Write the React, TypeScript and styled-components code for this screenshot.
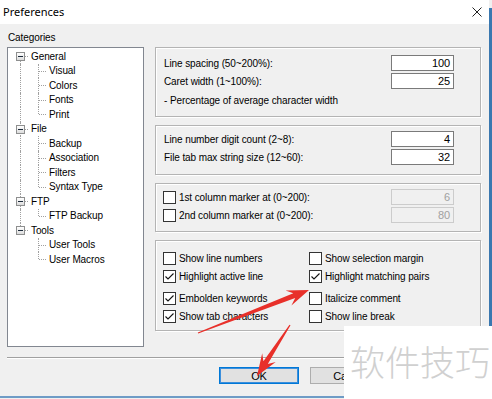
import React from "react";
import styled, { createGlobalStyle } from "styled-components";

const GlobalStyle = createGlobalStyle`
  html, body {
    margin: 0;
    padding: 0;
    background: #ffffff;
  }
  body {
    font-family: "Liberation Sans", Arial, sans-serif;
    color: #000;
  }
`;

const Screen = styled.div`
  position: relative;
  width: 492px;
  height: 399px;
  overflow: hidden;
  display: flex;
  flex-direction: column;
  background: #f0f0f0;
`;

const Frame = styled.div`
  display: flex;
  height: 396px;
  flex-shrink: 0;
`;

const Dialog = styled.div`
  width: 489px;
  display: flex;
  flex-direction: column;
  background: #f0f0f0;
`;

const RightEdge = styled.div`
  width: 3px;
  margin-top: 8px;
  background: #3a78b0;
`;

const BottomEdge = styled.div`
  height: 2px;
  background: #6f9cc6;
  flex-shrink: 0;
`;

const TitleBar = styled.div`
  height: 24px;
  flex-shrink: 0;
  background: #ffffff;
  display: flex;
  align-items: center;
  justify-content: space-between;
  padding: 0 7px 0 3px;
`;

const Title = styled.span`
  font-family: "Noto Sans", "Liberation Sans", sans-serif;
  font-size: 11px;
  line-height: 14px;
`;

const CloseIcon = styled.svg`
  width: 10px;
  height: 10px;
  display: block;
`;

const Body = styled.div`
  flex: 1;
  display: flex;
  flex-direction: column;
  padding: 0 7px;
  font-size: 10px;
  letter-spacing: -0.1px;
`;

const Main = styled.div`
  display: flex;
  gap: 11px;
`;

const Sidebar = styled.div`
  width: 137px;
  display: flex;
  flex-direction: column;
`;

const SectionLabel = styled.div`
  height: 20px;
  padding: 3px 0 0 1px;
  display: flex;
  align-items: center;
`;

const Tree = styled.div`
  height: 300px;
  box-sizing: border-box;
  border: 1px solid #828790;
  background: #ffffff;
  padding: 1px 0 0 3px;
`;

const TreeRow = styled.div`
  height: 14.5px;
  display: flex;
  align-items: stretch;
`;

type Vert = "full" | "top" | "bottom" | "none";

const Guide = styled.div<{ $vert: Vert; $horiz?: boolean }>`
  position: relative;
  width: 18px;
  flex-shrink: 0;

  &::before {
    content: "";
    position: absolute;
    left: 9px;
    top: ${(p) => (p.$vert === "bottom" ? "50%" : "0")};
    bottom: ${(p) => (p.$vert === "top" ? "50%" : "0")};
    border-left: 1px dotted #a0a0a0;
    display: ${(p) => (p.$vert === "none" ? "none" : "block")};
  }

  &::after {
    content: "";
    position: absolute;
    left: 10px;
    right: 1px;
    top: 50%;
    border-top: 1px dotted #a0a0a0;
    display: ${(p) => (p.$horiz ? "block" : "none")};
  }
`;

const Expander = styled.div`
  position: absolute;
  z-index: 1;
  left: 5px;
  top: 50%;
  margin-top: -4px;
  width: 7px;
  height: 7px;
  border: 1px solid #8e8f8f;
  background: linear-gradient(#ffffff, #dcdcdc);
  display: flex;
  align-items: center;
  justify-content: center;

  &::before {
    content: "";
    width: 5px;
    height: 1px;
    background: #1c2a3a;
  }
`;

const TreeText = styled.span`
  padding-left: 2px;
  display: flex;
  align-items: center;
  white-space: nowrap;
`;

const Content = styled.div`
  width: 326px;
  padding-top: 23px;
  display: flex;
  flex-direction: column;
  gap: 8px;
`;

const Group = styled.div<{ $h: number; $pt: number }>`
  height: ${(p) => p.$h}px;
  box-sizing: border-box;
  border: 1px solid #b4b4b4;
  box-shadow: inset 1px 1px 0 #ffffff, 1px 1px 0 #ffffff;
  padding: ${(p) => p.$pt}px 26px 0 7px;
  display: flex;
  flex-direction: column;
  gap: 2px;
`;

const FieldRow = styled.div`
  height: 16px;
  display: flex;
  align-items: center;
  justify-content: space-between;
`;

const Label = styled.span`
  padding-left: 1px;
  white-space: nowrap;
`;

const Note = styled.div`
  height: 18px;
  padding-left: 1px;
  display: flex;
  align-items: center;
`;

const NumberBox = styled.div<{ $disabled?: boolean }>`
  width: 63px;
  height: 16px;
  box-sizing: border-box;
  border: 1px solid ${(p) => (p.$disabled ? "#cccccc" : "#7a7a7a")};
  background: ${(p) => (p.$disabled ? "#f0f0f0" : "#ffffff")};
  color: ${(p) => (p.$disabled ? "#a0a0a0" : "#000000")};
  display: flex;
  align-items: center;
  justify-content: flex-end;
  padding-right: 3px;
  font-size: 11px;
`;

const CheckLine = styled.div`
  display: flex;
  align-items: center;
  gap: 3px;
  white-space: nowrap;
  height: 16px;
`;

const Box = styled.div`
  width: 13px;
  height: 13px;
  box-sizing: border-box;
  border: 1px solid #333333;
  background: #ffffff;
  flex-shrink: 0;
  display: flex;
  align-items: center;
  justify-content: center;
`;

const CheckGrid = styled.div<{ $mt?: number }>`
  display: grid;
  grid-template-columns: 146px 1fr;
  row-gap: 2px;
  margin-top: ${(p) => p.$mt ?? 0}px;
`;

const Separator = styled.div`
  margin-top: 10px;
  border-top: 1px solid #a0a0a0;
  border-bottom: 1px solid #ffffff;
`;

const ButtonRow = styled.div`
  margin-top: 8px;
  padding-left: 212px;
  display: flex;
  gap: 11px;
`;

const Button = styled.div<{ $default?: boolean }>`
  width: 80px;
  height: 17px;
  box-sizing: border-box;
  border: 1px solid ${(p) => (p.$default ? "#0078d7" : "#adadad")};
  box-shadow: ${(p) => (p.$default ? "inset 0 0 0 1px #3c8fdc" : "none")};
  background: #e1e1e1;
  display: flex;
  align-items: center;
  justify-content: center;
  font-size: 11px;
`;

const Watermark = styled.div`
  position: absolute;
  left: 344px;
  top: 326px;
  right: 0;
  bottom: 0;
  background: #ffffff;
  display: flex;
  align-items: center;
  padding: 0 0 4px 6px;
  font-family: "Noto Sans CJK SC", "Noto Sans", sans-serif;
  font-size: 35px;
  font-weight: 300;
  color: #d0d0d0;
  white-space: nowrap;
`;

const Arrows = styled.svg`
  position: absolute;
  left: 0;
  top: 0;
  width: 492px;
  height: 399px;
  pointer-events: none;
`;

const tree = [
  { label: "General", children: ["Visual", "Colors", "Fonts", "Print"] },
  { label: "File", children: ["Backup", "Association", "Filters", "Syntax Type"] },
  { label: "FTP", children: ["FTP Backup"] },
  { label: "Tools", children: ["User Tools", "User Macros"] },
];

function Check({ on }: { on?: boolean }) {
  return (
    <Box>
      {on && (
        <svg width="11" height="11" viewBox="0 0 11 11">
          <polyline points="1.5,5.5 4,8 9.5,2.5" fill="none" stroke="#111" strokeWidth="1.1" />
        </svg>
      )}
    </Box>
  );
}

function CheckItem({ on, children }: { on?: boolean; children: React.ReactNode }) {
  return (
    <CheckLine>
      <Check on={on} />
      <span>{children}</span>
    </CheckLine>
  );
}

// tapered screenshot-style arrow, tail -> tip
function arrow(x1: number, y1: number, x2: number, y2: number, head = 22, half = 8) {
  const dx = x2 - x1;
  const dy = y2 - y1;
  const len = Math.hypot(dx, dy);
  const ux = dx / len;
  const uy = dy / len;
  const nx = -uy;
  const ny = ux;
  const bx = x2 - ux * head;
  const by = y2 - uy * head;
  const kx = x2 - ux * head * 0.72;
  const ky = y2 - uy * head * 0.72;
  const pts = [
    [x1 + nx * 0.6, y1 + ny * 0.6],
    [kx + nx * 2.6, ky + ny * 2.6],
    [bx + nx * half, by + ny * half],
    [x2, y2],
    [bx - nx * half, by - ny * half],
    [kx - nx * 2.6, ky - ny * 2.6],
    [x1 - nx * 0.6, y1 - ny * 0.6],
  ];
  return pts.map((p) => `${p[0].toFixed(1)},${p[1].toFixed(1)}`).join(" ");
}

export default function App() {
  return (
    <>
      <GlobalStyle />
      <Screen>
        <Frame>
          <Dialog>
            <TitleBar>
              <Title>Preferences</Title>
              <CloseIcon viewBox="0 0 10 10">
                <path d="M0.5 0.5 L9.5 9.5 M9.5 0.5 L0.5 9.5" stroke="#222" strokeWidth="1" />
              </CloseIcon>
            </TitleBar>
            <Body>
              <Main>
                <Sidebar>
                  <SectionLabel>Categories</SectionLabel>
                  <Tree>
                    {tree.map((node, i) => {
                      const last = i === tree.length - 1;
                      return (
                        <React.Fragment key={node.label}>
                          <TreeRow>
                            <Guide $vert={i === 0 ? "bottom" : last ? "top" : "full"} $horiz>
                              <Expander />
                            </Guide>
                            <TreeText>{node.label}</TreeText>
                          </TreeRow>
                          {node.children.map((child, j) => (
                            <TreeRow key={child}>
                              <Guide $vert={last ? "none" : "full"} />
                              <Guide $vert={j === node.children.length - 1 ? "top" : "full"} $horiz />
                              <TreeText>{child}</TreeText>
                            </TreeRow>
                          ))}
                        </React.Fragment>
                      );
                    })}
                  </Tree>
                </Sidebar>

                <Content>
                  <Group $h={70} $pt={7}>
                    <FieldRow>
                      <Label>Line spacing (50~200%):</Label>
                      <NumberBox>100</NumberBox>
                    </FieldRow>
                    <FieldRow>
                      <Label>Caret width (1~100%):</Label>
                      <NumberBox>25</NumberBox>
                    </FieldRow>
                    <Note>- Percentage of average character width</Note>
                  </Group>

                  <Group $h={50} $pt={5}>
                    <FieldRow>
                      <Label>Line number digit count (2~8):</Label>
                      <NumberBox>4</NumberBox>
                    </FieldRow>
                    <FieldRow>
                      <Label>File tab max string size (12~60):</Label>
                      <NumberBox>32</NumberBox>
                    </FieldRow>
                  </Group>

                  <Group $h={49} $pt={5}>
                    <FieldRow>
                      <CheckItem>1st column marker at (0~200):</CheckItem>
                      <NumberBox $disabled>6</NumberBox>
                    </FieldRow>
                    <FieldRow>
                      <CheckItem>2nd column marker at (0~200):</CheckItem>
                      <NumberBox $disabled>80</NumberBox>
                    </FieldRow>
                  </Group>

                  <Group $h={91} $pt={9}>
                    <CheckGrid>
                      <CheckItem>Show line numbers</CheckItem>
                      <CheckItem>Show selection margin</CheckItem>
                      <CheckItem on>Highlight active line</CheckItem>
                      <CheckItem on>Highlight matching pairs</CheckItem>
                    </CheckGrid>
                    <CheckGrid $mt={4}>
                      <CheckItem on>Embolden keywords</CheckItem>
                      <CheckItem>Italicize comment</CheckItem>
                      <CheckItem on>Show tab characters</CheckItem>
                      <CheckItem>Show line break</CheckItem>
                    </CheckGrid>
                  </Group>
                </Content>
              </Main>

              <Separator />
              <ButtonRow>
                <Button $default>OK</Button>
                <Button>Cancel</Button>
              </ButtonRow>
            </Body>
          </Dialog>
          <RightEdge />
        </Frame>
        <BottomEdge />

        <Watermark>软件技巧</Watermark>

        <Arrows viewBox="0 0 492 399">
          <polygon points={arrow(198, 333, 309, 290)} fill="#e8302a" />
          <polygon points={arrow(290, 325, 257, 376)} fill="#e8302a" />
        </Arrows>
      </Screen>
    </>
  );
}
